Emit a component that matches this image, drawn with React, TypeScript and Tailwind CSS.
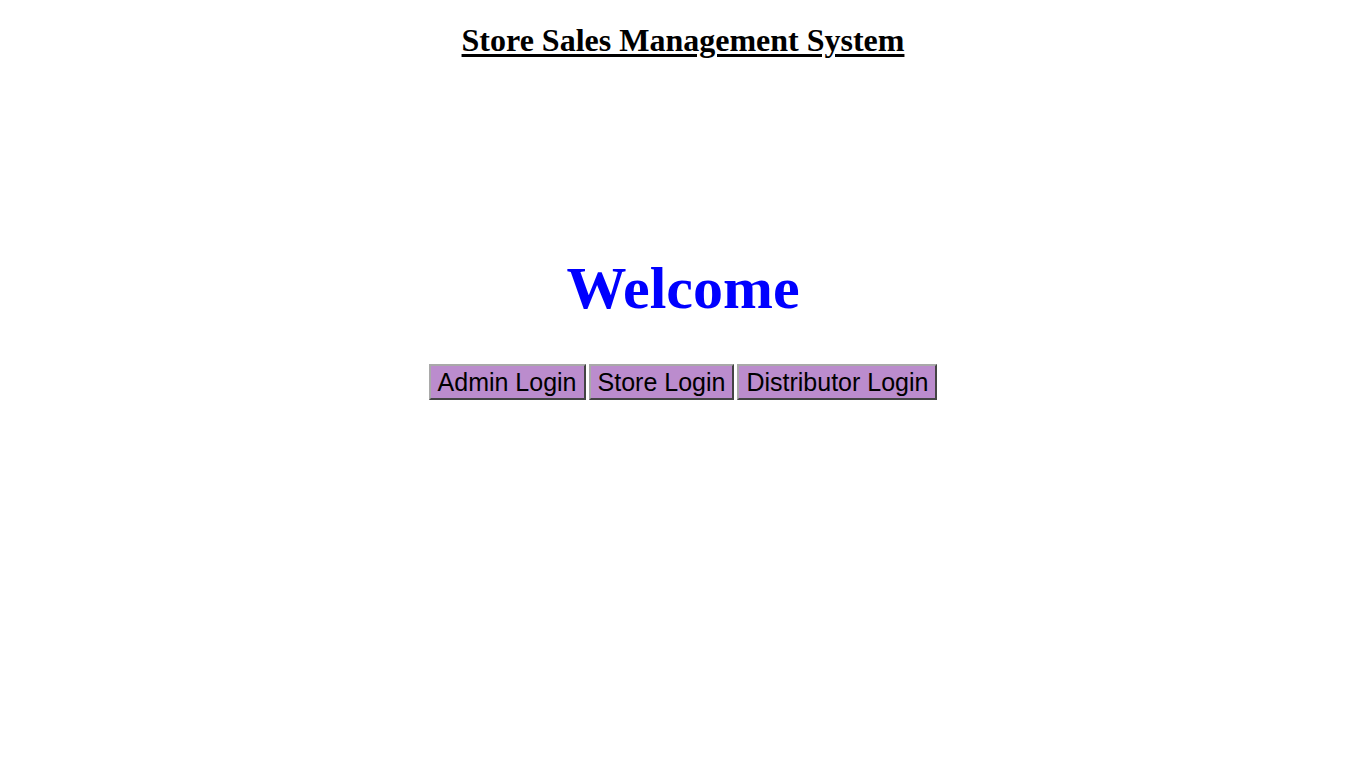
export default function App() {
    const buttons = ['Admin Login', 'Store Login', 'Distributor Login']

    return (
        <div className="min-h-screen bg-white text-center font-['Liberation_Serif',serif]">
            <h2 className="pt-[20px] text-[32px] font-bold leading-[40px] text-black underline decoration-[3px] underline-offset-[3px]">
                Store Sales Management System
            </h2>

            <h1 className="mt-[188px] text-[60px] font-bold leading-[80px] text-[#0000ff]">Welcome</h1>

            <div className="mt-[36px] flex justify-center gap-[3px]">
                {buttons.map((label) => (
                    <button
                        key={label}
                        className="h-[36px] border-2 border-t-[#a9a9a9] border-l-[#a9a9a9] border-b-[#444] border-r-[#444] bg-[#bb8ccd] px-[7px] font-['Liberation_Sans',sans-serif] text-[25px] leading-[30px] text-black"
                    >
                        {label}
                    </button>
                ))}
            </div>
        </div>
    )
}
